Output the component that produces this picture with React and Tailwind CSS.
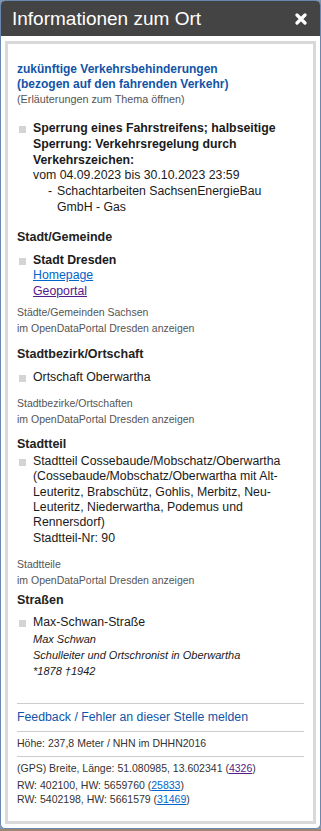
import React from "react";

const Bullet = ({ children, bold }) => (
  <div className="flex">
    <span className="w-[7px] h-[7px] bg-[#d4d4d4] ml-[2px] mr-[7px] mt-[5px] shrink-0" />
    <div className={bold ? "font-bold" : ""}>{children}</div>
  </div>
);

const Heading = ({ children, className = "" }) => (
  <div className={`font-bold text-[12.5px] leading-[16px] text-[#222] ${className}`}>{children}</div>
);

const OpenData = ({ label, className = "" }) => (
  <div className={`text-[10.5px] leading-[16px] text-[#555] ${className}`}>
    {label}
    <br />
    im OpenDataPortal Dresden anzeigen
  </div>
);

export default function App() {
  return (
    <div className="w-[321px] h-[831px] bg-[#7f96b3] font-['Liberation_Sans',Arial,sans-serif]">
      <div className="w-[321px] h-[829px] rounded-[5px] border border-[#6a87b0] bg-white overflow-hidden flex flex-col">
        {/* Titelleiste */}
        <div className="h-[35px] bg-[#444444] flex items-center justify-between pl-[11px] pr-[13px] shrink-0">
          <span className="text-white text-[19px] leading-none">Informationen zum Ort</span>
          <svg width="12" height="12" viewBox="0 0 12 12">
            <path d="M2 2 L10 10 M10 2 L2 10" stroke="#fff" strokeWidth="3.2" strokeLinecap="round" />
          </svg>
        </div>

        <div className="flex-1 pt-[5px] px-[4px] pb-[4px] flex">
          <div className="flex-1 border-[3px] border-[#d9d9d9] px-[9px] pt-[18px] text-[12.3px] leading-[15.6px] text-[#1a1a1a]">
            {/* Verkehr */}
            <div className="font-bold text-[12px] text-[#1254a8] leading-[15px]">
              zukünftige Verkehrsbehinderungen
              <br />
              (bezogen auf den fahrenden Verkehr)
            </div>
            <div className="text-[10.8px] leading-[15px] text-[#555]">(Erläuterungen zum Thema öffnen)</div>

            <div className="mt-[14px] leading-[15.8px]">
              <Bullet>
                <div className="font-bold">
                  Sperrung eines Fahrstreifens; halbseitige Sperrung: Verkehrsregelung durch Verkehrszeichen:
                </div>
                <div>vom 04.09.2023 bis 30.10.2023 23:59</div>
                <div className="flex ml-[15px]">
                  <span className="w-[9px] shrink-0">-</span>
                  <span>
                    Schachtarbeiten SachsenEnergieBau
                    <br />
                    GmbH - Gas
                  </span>
                </div>
              </Bullet>
            </div>

            {/* Stadt/Gemeinde */}
            <Heading className="mt-[13px]">Stadt/Gemeinde</Heading>
            <div className="mt-[8px] leading-[15.5px]">
              <Bullet>
                <div className="font-bold">Stadt Dresden</div>
                <div>
                  <a className="text-[#0066cc] underline" href="#">Homepage</a>
                </div>
                <div>
                  <a className="text-[#551a8b] underline" href="#">Geoportal</a>
                </div>
              </Bullet>
            </div>
            <OpenData label="Städte/Gemeinden Sachsen" className="mt-[5px]" />

            {/* Stadtbezirk/Ortschaft */}
            <Heading className="mt-[10px]">Stadtbezirk/Ortschaft</Heading>
            <div className="mt-[8px] leading-[15.5px]">
              <Bullet>Ortschaft Oberwartha</Bullet>
            </div>
            <OpenData label="Stadtbezirke/Ortschaften" className="mt-[9px] leading-[15.5px]" />

            {/* Stadtteil */}
            <Heading className="mt-[9px]">Stadtteil</Heading>
            <div className="mt-[2px] leading-[15.4px]">
              <Bullet>
                Stadtteil Cossebaude/Mobschatz/Oberwartha
                <br />
                (Cossebaude/Mobschatz/Oberwartha mit Alt-
                <br />
                Leuteritz, Brabschütz, Gohlis, Merbitz, Neu-
                <br />
                Leuteritz, Niederwartha, Podemus und
                <br />
                Rennersdorf)
                <br />
                Stadtteil-Nr: 90
              </Bullet>
            </div>
            <OpenData label="Stadtteile" className="mt-[10px]" />

            {/* Straßen */}
            <Heading className="mt-[4px]">Straßen</Heading>
            <div className="mt-[7px] leading-[15.5px]">
              <Bullet>
                <div>Max-Schwan-Straße</div>
                <div className="italic text-[11px] leading-[16px]">Max Schwan</div>
                <div className="italic text-[11px] leading-[16px]">Schulleiter und Ortschronist in Oberwartha</div>
                <div className="italic text-[11px] leading-[17px]">*1878 †1942</div>
              </Bullet>
            </div>

            {/* Fußbereich */}
            <div className="mt-[23px] border-t border-[#cccccc]" />
            <div className="py-[6px] text-[12.3px] leading-[15px] text-[#1254a8]">Feedback / Fehler an dieser Stelle melden</div>
            <div className="border-t border-[#cccccc]" />
            <div className="pt-[4px] pb-[5px] text-[10.5px] leading-[15px] text-[#333]">Höhe: 237,8 Meter / NHN im DHHN2016</div>
            <div className="border-t border-[#cccccc]" />
            <div className="pt-[4px] text-[10.5px] leading-[15px] text-[#333]">
              (GPS) Breite, Länge: 51.080985, 13.602341 (
              <a className="text-[#551a8b] underline" href="#">4326</a>)
            </div>
            <div className="mt-[2px] text-[10.5px] leading-[14px] text-[#333]">
              RW: 402100, HW: 5659760 (<a className="text-[#0066cc] underline" href="#">25833</a>)
              <br />
              RW: 5402198, HW: 5661579 (<a className="text-[#0066cc] underline" href="#">31469</a>)
            </div>
          </div>
        </div>
      </div>
      <div className="h-[2px] bg-[#9c8872]" />
    </div>
  );
}
